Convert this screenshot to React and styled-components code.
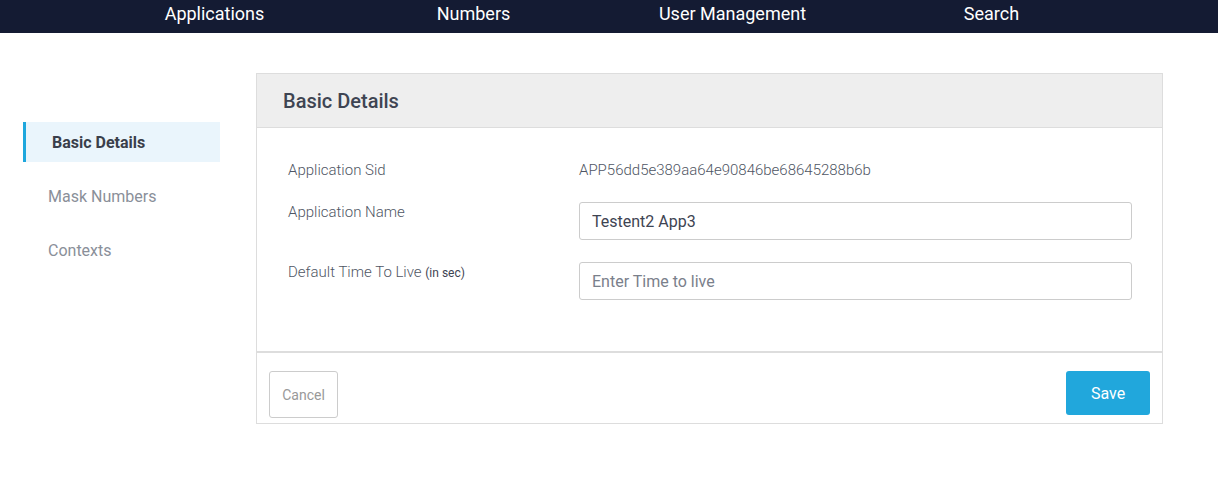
import React from "react";
import styled, { createGlobalStyle } from "styled-components";

const GlobalStyle = createGlobalStyle`
    body {
        margin : 0;
        font-family : Roboto, "Liberation Sans", Arial, sans-serif;
        background : #ffffff;
    }
`;

const NavBar = styled.div`
    height : 33px;
    background : #141b33;
    display : flex;
    padding-left : 85px;
`;

const NavItem = styled.div`
    width : 259px;
    text-align : center;
    color : #ffffff;
    font-size : 18px;
    line-height : 28px;
`;

const Page = styled.div`
    display : flex;
    padding-top : 40px;
`;

const Sidebar = styled.div`
    width : 197px;
    margin-left : 23px;
    padding-top : 49px;
    display : flex;
    flex-direction : column;
`;

const SideItem = styled.div`
    height : 40px;
    display : flex;
    align-items : center;
    padding-left : ${(p) => (p.active ? "26px" : "22px")};
    margin-bottom : 14px;
    font-size : 16px;
    font-weight : ${(p) => (p.active ? 700 : 400)};
    color : ${(p) => (p.active ? "#3a3f4b" : "#8a8f99")};
    background : ${(p) => (p.active ? "#eaf5fc" : "transparent")};
    border-left : 3px solid ${(p) => (p.active ? "#1ea7dd" : "transparent")};
`;

const Panel = styled.div`
    margin-left : 36px;
    width : 905px;
    border : 1px solid #dddddd;
`;

const PanelHeader = styled.div`
    height : 52px;
    padding-top : 1px;
    background : #eeeeee;
    border-bottom : 1px solid #dddddd;
    display : flex;
    align-items : center;
    padding-left : 26px;
    font-size : 20px;
    font-weight : 500;
    color : #3e4452;
`;

const PanelBody = styled.div`
    padding : 34px 30px 51px 31px;
    border-bottom : 2px solid #dddddd;
    display : flex;
    flex-direction : column;
    gap : 22px;
`;

const Row = styled.div`
    display : grid;
    grid-template-columns : 291px 1fr;
    align-items : start;
    margin-bottom : ${(p) => p.extra || 0}px;
`;

const Label = styled.div`
    font-size : 15px;
    line-height : 17px;
    font-weight : 300;
    color : #4f5664;
    padding-top : ${(p) => p.top || 0}px;
`;

const Small = styled.span`
    font-size : 12px;
    font-weight : 400;
    color : #3e4452;
`;

const Value = styled.div`
    font-size : 15px;
    line-height : 17px;
    font-weight : 300;
    color : #4f5664;
`;

const Input = styled.input`
    box-sizing : border-box;
    width : 100%;
    height : 38px;
    border : 1px solid #cccccc;
    border-radius : 3px;
    padding : 0 12px;
    font-family : Roboto, "Liberation Sans", Arial, sans-serif;
    font-size : 16px;
    color : #3e4452;
    outline : none;

    &::placeholder {
        color : #7a808b;
    }
`;

const Footer = styled.div`
    display : flex;
    justify-content : space-between;
    align-items : flex-start;
    padding : 18px 12px 5px 12px;
`;

const CancelButton = styled.button`
    width : 69px;
    height : 47px;
    background : #ffffff;
    border : 1px solid #cccccc;
    border-radius : 3px;
    font-family : Roboto, "Liberation Sans", Arial, sans-serif;
    font-size : 14px;
    color : #999999;
`;

const SaveButton = styled.button`
    width : 84px;
    height : 44px;
    background : #21a7dc;
    border : none;
    border-radius : 3px;
    font-family : Roboto, "Liberation Sans", Arial, sans-serif;
    font-size : 16px;
    color : #ffffff;
`;

function App() {
    return (
        <>
            <GlobalStyle />
            <NavBar>
                <NavItem>Applications</NavItem>
                <NavItem>Numbers</NavItem>
                <NavItem>User Management</NavItem>
                <NavItem>Search</NavItem>
            </NavBar>
            <Page>
                <Sidebar>
                    <SideItem active>Basic Details</SideItem>
                    <SideItem>Mask Numbers</SideItem>
                    <SideItem>Contexts</SideItem>
                </Sidebar>
                <Panel>
                    <PanelHeader>Basic Details</PanelHeader>
                    <PanelBody>
                        <Row extra = {1}>
                            <Label>Application Sid</Label>
                            <Value>APP56dd5e389aa64e90846be68645288b6b</Value>
                        </Row>
                        <Row>
                            <Label top = {2}>Application Name</Label>
                            <Input defaultValue = "Testent2 App3" />
                        </Row>
                        <Row>
                            <Label top = {2}>Default Time To Live <Small>(in sec)</Small></Label>
                            <Input placeholder = "Enter Time to live" />
                        </Row>
                    </PanelBody>
                    <Footer>
                        <CancelButton>Cancel</CancelButton>
                        <SaveButton>Save</SaveButton>
                    </Footer>
                </Panel>
            </Page>
        </>
    );
}

export default App;
